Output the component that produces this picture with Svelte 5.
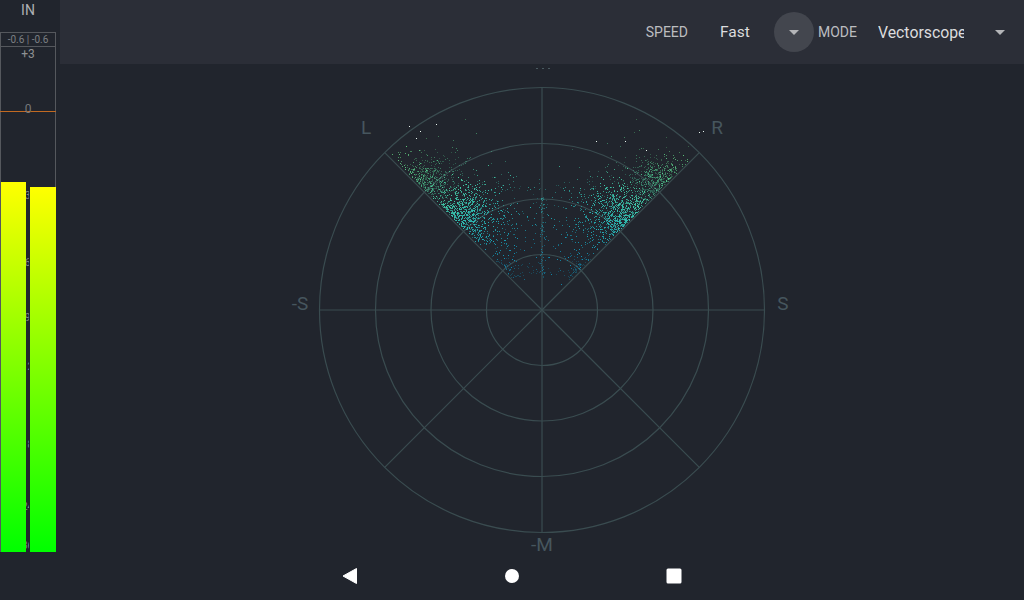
<script lang="ts">
  import { onMount } from "svelte";

  const cx = 542;
  const cy = 310;
  const radii = [55.5, 111, 166.5, 222.5];
  const reach = 157.3;
  const spokes = [
    [-reach, -reach],
    [reach, -reach],
    [-reach, reach],
    [reach, reach],
  ];
  const ticks = [
    { label: "3", y: 196 },
    { label: "6", y: 263 },
    { label: "9", y: 318 },
    { label: "12", y: 367 },
    { label: "18", y: 445 },
    { label: "24", y: 507 },
    { label: "36", y: 546 },
  ];

  let dots: HTMLCanvasElement | null = null;

  // small seeded generator so the cloud comes out the same on every load
  function makeRandom(seed: number) {
    let s = seed;
    return () => {
      s = (s * 1664525 + 1013904223) >>> 0;
      return s / 4294967296;
    };
  }

  function gauss(rnd: () => number) {
    return (rnd() + rnd() + rnd() + rnd() - 2) / 0.58;
  }

  function colorFor(dist: number, bright: number) {
    // teal near the middle, greener and paler towards the rim
    const t = Math.min(1, Math.max(0, (dist - 60) / 150));
    const r = 10 + 100 * t;
    const g = 165 + 70 * t;
    const b = 210 - 70 * t;
    return `rgba(${r | 0},${g | 0},${b | 0},${bright})`;
  }

  function plot(ctx: CanvasRenderingContext2D, x: number, y: number, bright: number) {
    const dx = x - cx;
    const dy = cy - y;
    if (dy <= Math.abs(dx) + 1) return;
    const dist = Math.hypot(dx, dy);
    if (dist > 222) return;
    ctx.fillStyle = colorFor(dist, bright);
    ctx.fillRect(Math.round(x), Math.round(y), 1, 1);
  }

  // runs along one of the 45 degree edges: along = distance from centre, off = distance from the edge
  function lobe(
    ctx: CanvasRenderingContext2D,
    rnd: () => number,
    side: number,
    count: number,
    alongMid: number,
    alongSpread: number,
    offSpread: number,
    bright: number,
  ) {
    for (let i = 0; i < count; i++) {
      const along = alongMid + gauss(rnd) * alongSpread;
      const off = Math.abs(gauss(rnd)) * offSpread + 2;
      const x = cx + side * (along * Math.SQRT1_2 - off * Math.SQRT1_2);
      const y = cy - (along * Math.SQRT1_2 + off * Math.SQRT1_2);
      plot(ctx, x, y, bright * (0.55 + rnd() * 0.45));
    }
  }

  function drawCloud(ctx: CanvasRenderingContext2D) {
    const rnd = makeRandom(41);
    for (const side of [-1, 1]) {
      lobe(ctx, rnd, side, 720, 124, 14, 20, 1);
      lobe(ctx, rnd, side, 480, 170, 12, 17, 0.4);
      lobe(ctx, rnd, side, 80, 182, 14, 12, 0.8);
      lobe(ctx, rnd, side, 240, 92, 22, 30, 0.85);
      lobe(ctx, rnd, side, 110, 130, 38, 36, 0.5);
      lobe(ctx, rnd, side, 45, 56, 8, 5, 0.4);
      lobe(ctx, rnd, side, 14, 198, 8, 7, 0.7);
    }
    // the thin column on the middle axis
    for (let i = 0; i < 70; i++) {
      const y = cy - 28 - rnd() * 85;
      plot(ctx, cx + gauss(rnd) * 1.2, y, 0.25 + rnd() * 0.35);
    }
    // floor of the cloud between the lower edges
    for (let i = 0; i < 60; i++) {
      const x = cx - 40 + rnd() * 80;
      plot(ctx, x, cy - 36 - Math.abs(gauss(rnd)) * 6 + Math.abs(x - cx) * 0.1, 0.28);
    }
    // thin scatter above the main lobes
    for (let i = 0; i < 70; i++) {
      const x = cx - 85 + rnd() * 170;
      plot(ctx, x, cy - 90 - rnd() * 35 - (Math.abs(x - cx) / 85) * 25, 0.15 + rnd() * 0.3);
    }
    // stragglers outside the outer ring
    ctx.fillStyle = "#e8f5ee";
    for (const [x, y] of [[409, 126], [420, 131], [416, 138], [436, 124], [596, 141], [699, 132], [703, 131], [625, 141], [646, 150]]) {
      ctx.fillRect(x, y, 1, 1);
    }
  }

  onMount(() => {
    const ctx = dots?.getContext("2d");
    if (ctx) drawCloud(ctx);
  });
</script>

<div class="screen">
  <aside class="meter">
    <div class="channel">IN</div>
    <div class="scale">
      <div class="peak">-0.6 | -0.6</div>
      <div class="plus">+3</div>
      <div class="zero">0</div>
      <div class="bars">
        <div class="bar left"></div>
        <div class="bar right"></div>
      </div>
      {#each ticks as t}
        <span class="tick" style="top: {t.y}px">{t.label}</span>
      {/each}
    </div>
  </aside>

  <main class="main">
    <header class="toolbar">
      <span class="caption speed">SPEED</span>
      <span class="value fast">Fast</span>
      <button type="button" class="drop focused" aria-label="Speed"><i class="caret"></i></button>
      <span class="caption">MODE</span>
      <span class="value mode">Vectorscope</span>
      <button type="button" class="drop" aria-label="Mode"><i class="caret"></i></button>
    </header>
    <div class="stage"></div>
  </main>

  <svg class="scope" width="1024" height="600" viewBox="0 0 1024 600">
    <g fill="none" stroke="#3a4c50" stroke-width="1.2">
      {#each radii as r}
        <circle cx={cx} cy={cy} r={r} />
      {/each}
      <line x1={cx} y1={cy - 222.5} x2={cx} y2={cy + 222.5} />
      <line x1={cx - 222.5} y1={cy} x2={cx + 222.5} y2={cy} />
      {#each spokes as [dx, dy]}
        <line x1={cx} y1={cy} x2={cx + dx} y2={cy + dy} />
      {/each}
    </g>
    <g class="axis">
      <text x="366" y="134">L</text>
      <text x="717" y="134">R</text>
      <text x="300" y="310">-S</text>
      <text x="783" y="310">S</text>
      <text x="542" y="551">-M</text>
    </g>
    <g fill="#4a5a60">
      <rect x="536" y="68" width="2" height="1" />
      <rect x="542" y="68" width="2" height="1" />
      <rect x="548" y="68" width="2" height="1" />
    </g>
  </svg>
  <canvas class="dots" bind:this={dots} width="1024" height="600"></canvas>

  <nav class="navbar">
    <svg width="16" height="16" viewBox="0 0 16 16" aria-hidden="true">
      <path d="M1 8 L14.5 0.5 V15.5 Z" fill="#fff" stroke="#fff" stroke-linejoin="round" />
    </svg>
    <svg width="16" height="16" viewBox="0 0 16 16" aria-hidden="true">
      <circle cx="8" cy="8" r="7" fill="#fff" />
    </svg>
    <svg width="16" height="16" viewBox="0 0 16 16" aria-hidden="true">
      <rect x="0.5" y="0.5" width="15" height="15" rx="1.5" fill="#fff" />
    </svg>
  </nav>
</div>

<style>
  :global(body) {
    margin: 0;
    background: #21252d;
  }
  .screen {
    position: relative;
    display: grid;
    grid-template-columns: 60px 1fr;
    grid-template-rows: 552px 48px;
    width: 1024px;
    height: 600px;
    overflow: hidden;
    background: #21252d;
    font-family: Roboto, "Liberation Sans", sans-serif;
  }
  .meter {
    display: flex;
    flex-direction: column;
    color: #a9acb0;
  }
  .channel {
    height: 32px;
    box-sizing: border-box;
    padding-top: 2px;
    padding-right: 4px;
    text-align: center;
    font-size: 14px;
    line-height: 17px;
    color: #aeb0b3;
  }
  .scale {
    position: relative;
    flex: 1;
    width: 56px;
    box-sizing: border-box;
    border: 1px solid #55585d;
    border-bottom: 0;
  }
  .peak {
    height: 13px;
    border-bottom: 1px solid #55585d;
    text-align: center;
    font-size: 10px;
    line-height: 14px;
    color: #7d8084;
    white-space: nowrap;
  }
  .plus {
    text-align: center;
    font-size: 12px;
    line-height: 14px;
    color: #8f9194;
  }
  .zero {
    position: absolute;
    left: -1px;
    right: -1px;
    top: 71px;
    height: 7px;
    border-bottom: 1px solid #c26a22;
    text-align: center;
    font-size: 12px;
    line-height: 11px;
    color: #77797c;
  }
  .bars {
    position: absolute;
    left: 0;
    right: -1px;
    top: 149px;
    bottom: 0;
    display: flex;
    justify-content: space-between;
    align-items: flex-end;
  }
  .bar {
    background: linear-gradient(#ffff00, #00ff00);
  }
  .bar.left {
    width: 25px;
    height: 370px;
  }
  .bar.right {
    width: 26.5px;
    height: 365px;
  }
  .tick {
    position: absolute;
    left: 0;
    width: 53px;
    margin-top: -38px;
    text-align: center;
    font-size: 10px;
    line-height: 10px;
    color: #85878a;
    clip-path: inset(0 25px 0 25px);
  }
  .main {
    display: flex;
    flex-direction: column;
  }
  .toolbar {
    height: 64px;
    flex: none;
    display: flex;
    align-items: center;
    padding-right: 4px;
    background: #2b2e37;
    box-sizing: border-box;
  }
  .caption {
    font-size: 14px;
    color: #bcbdc0;
  }
  .speed {
    margin-left: auto;
  }
  .value {
    font-size: 15.5px;
    color: #dcdcde;
  }
  .fast {
    width: 54px;
    margin-left: 32px;
    box-sizing: border-box;
  }
  .mode {
    width: 86px;
    margin-left: 21px;
    overflow: hidden;
    white-space: nowrap;
    font-size: 15.8px;
  }
  .drop {
    width: 40px;
    height: 40px;
    padding: 0;
    border: 0;
    border-radius: 50%;
    background: transparent;
    display: flex;
    align-items: center;
    justify-content: center;
  }
  .drop.focused {
    background: #43464e;
    margin-right: 4px;
  }
  .mode + .drop {
    margin-left: 16px;
  }
  .caret {
    width: 0;
    height: 0;
    border-left: 5px solid transparent;
    border-right: 5px solid transparent;
    border-top: 5px solid #b4b5b8;
  }
  .stage {
    flex: 1;
  }
  .scope,
  .dots {
    position: absolute;
    left: 0;
    top: 0;
    pointer-events: none;
  }
  .axis text {
    fill: #46565e;
    font-size: 19px;
    text-anchor: middle;
  }
  .navbar {
    grid-column: 1 / -1;
    display: flex;
    align-items: center;
    justify-content: center;
    gap: 146px;
  }
</style>
